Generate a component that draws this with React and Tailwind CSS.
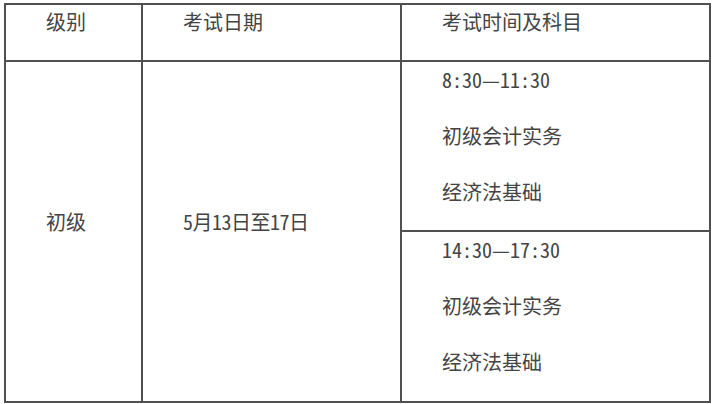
const font = {
  fontFamily: '"Noto Sans Mono CJK SC", "Noto Sans CJK SC", monospace',
};

function Lines({ items }) {
  return (
    <div className="flex flex-col gap-[36px] pl-[40px] pt-[8px]">
      {items.map((t) => (
        <div key={t} className="leading-[20px]">{t}</div>
      ))}
    </div>
  );
}

export default function App() {
  return (
    <div className="w-[715px] h-[404px] bg-white overflow-hidden pl-[4px] pt-[3px]" style={font}>
      <div className="grid grid-cols-[135px_257px_307px] grid-rows-[55px_168px_169px] gap-[2px] p-[2px] bg-[#505050] w-fit text-[20px] text-[#444]">
        <div className="bg-white pl-[40px] pt-[7px] leading-[20px]">级别</div>
        <div className="bg-white pl-[40px] pt-[7px] leading-[20px]">考试日期</div>
        <div className="bg-white pl-[40px] pt-[7px] leading-[20px]">考试时间及科目</div>

        <div className="bg-white row-span-2 flex items-center pl-[40px] pb-[20px] leading-[20px]">初级</div>
        <div className="bg-white row-span-2 flex items-center pl-[40px] pb-[20px] leading-[20px] tracking-[-0.5px]">5月13日至17日</div>
        <div className="bg-white">
          <Lines items={['8:30—11:30', '初级会计实务', '经济法基础']} />
        </div>
        <div className="bg-white">
          <Lines items={['14:30—17:30', '初级会计实务', '经济法基础']} />
        </div>
      </div>
    </div>
  );
}
